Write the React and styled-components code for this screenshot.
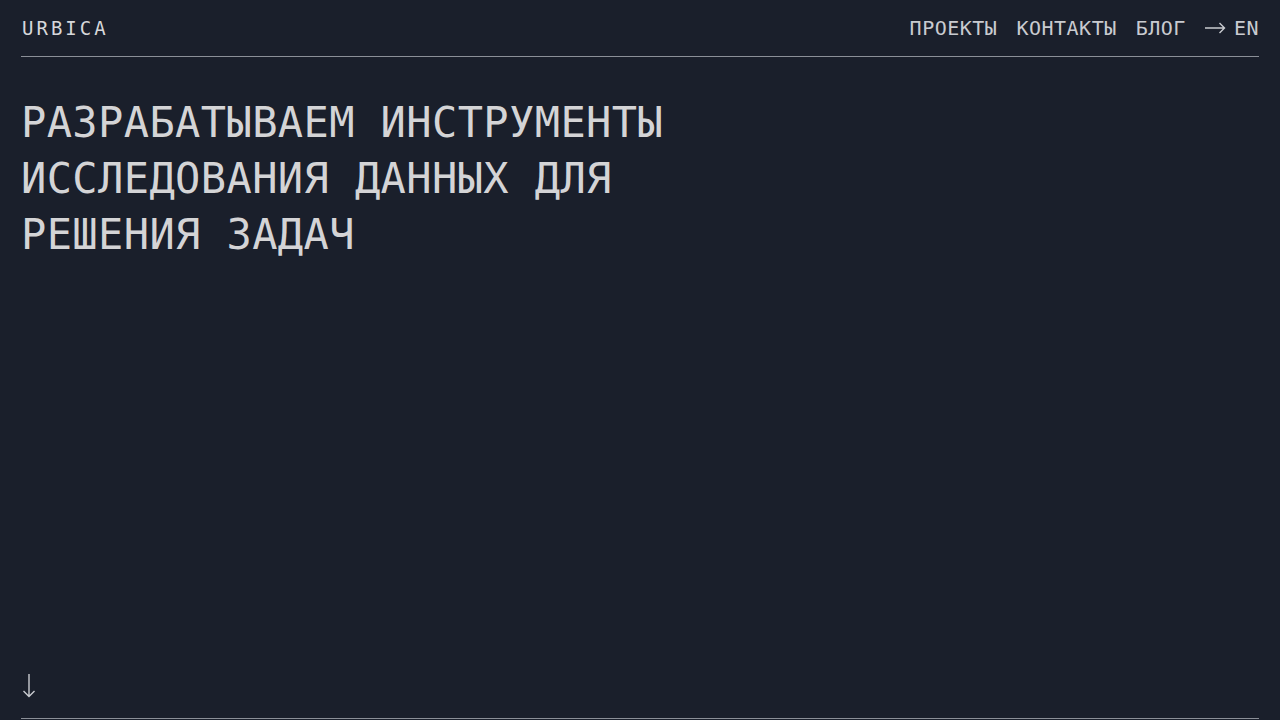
import React from "react";
import styled, { createGlobalStyle } from "styled-components";

const GlobalStyle = createGlobalStyle`
  html, body {
    margin: 0;
    padding: 0;
    background: #1a1f2b;
  }
  body {
    font-family: "DejaVu Sans Mono", "Liberation Mono", monospace;
    color: #d2d3d6;
    overflow: hidden;
  }
`;

const Page = styled.div`
  padding: 0 21px;
`;

const Hero = styled.section`
  height: 718px;
  display: flex;
  flex-direction: column;
`;

const Header = styled.header`
  height: 56px;
  display: flex;
  align-items: center;
  justify-content: space-between;
  border-bottom: 1px solid #8b8f97;
`;

const Logo = styled.a`
  padding-left: 1px;
  font-size: 19px;
  letter-spacing: 3px;
  color: #d6d7da;
  text-decoration: none;
`;

const Nav = styled.nav`
  display: flex;
  align-items: center;
  gap: 19px;
  padding-right: 1px;
`;

const NavLink = styled.a`
  display: flex;
  align-items: center;
  gap: 8px;
  font-size: 20px;
  letter-spacing: 0.5px;
  color: #c9cbd0;
  text-decoration: none;
  margin-right: ${(p) => (p.last ? "-1px" : "0")};
`;

const Title = styled.h1`
  margin: 38px 0 0;
  font-weight: normal;
  font-size: 42px;
  line-height: 56px;
  letter-spacing: 0.4px;
  color: #d4d4d6;
`;

const Spacer = styled.div`
  flex: 1;
`;

const ScrollDown = styled.a`
  display: block;
  width: 14px;
  height: 24px;
  margin: 0 0 20px 1px;
`;

const Next = styled.section`
  border-top: 1px solid #8b8f97;
  height: 200px;
`;

const RightArrow = () => (
  <svg width="21" height="12" viewBox="0 0 21 12" fill="none">
    <path d="M0 6H19.5M14.5 1L19.5 6L14.5 11" stroke="#c9cbd0" strokeWidth="1.4" />
  </svg>
);

const DownArrow = () => (
  <svg width="14" height="24" viewBox="0 0 14 24" fill="none">
    <path d="M7 0V22.5M1.5 17L7 22.5L12.5 17" stroke="#c9cbd0" strokeWidth="1.4" />
  </svg>
);

export default function App() {
  return (
    <Page>
      <GlobalStyle />
      <Hero>
        <Header>
          <Logo href="#">URBICA</Logo>
          <Nav>
            <NavLink href="#">ПРОЕКТЫ</NavLink>
            <NavLink href="#">КОНТАКТЫ</NavLink>
            <NavLink href="#">БЛОГ</NavLink>
            <NavLink href="#" last>
              <RightArrow />
              EN
            </NavLink>
          </Nav>
        </Header>
        <Title>
          РАЗРАБАТЫВАЕМ ИНСТРУМЕНТЫ
          <br />
          ИССЛЕДОВАНИЯ ДАННЫХ ДЛЯ
          <br />
          РЕШЕНИЯ ЗАДАЧ
        </Title>
        <Spacer />
        <ScrollDown href="#">
          <DownArrow />
        </ScrollDown>
      </Hero>
      <Next />
    </Page>
  );
}
